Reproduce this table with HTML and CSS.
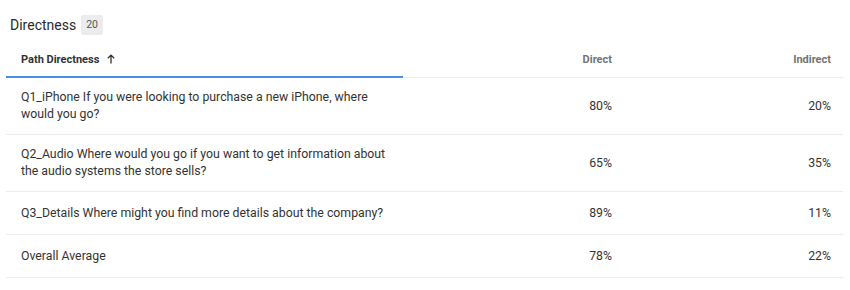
FILE: index.html
```html
<!DOCTYPE html>
<html>
<head>
<meta charset="utf-8">
<link rel="stylesheet" href="styles.css">
</head>
<body>
<div class="widget">
  <div class="title-row">
    <span class="title">Directness</span>
    <span class="badge">20</span>
  </div>
  <table class="grid">
    <colgroup>
      <col class="c1"><col class="c2"><col class="c3">
    </colgroup>
    <thead>
      <tr>
        <th class="sorted">Path Directness
          <svg class="arrow" width="8" height="10" viewBox="0 0 8 10"><path d="M4 9.5V1.2M0.8 4.3L4 1.1L7.2 4.3" fill="none" stroke="#333" stroke-width="1.3"/></svg>
        </th>
        <th class="num">Direct</th>
        <th class="num">Indirect</th>
      </tr>
    </thead>
    <tbody>
      <tr>
        <td>Q1_iPhone If you were looking to purchase a new iPhone, where would you go?</td>
        <td class="num">80%</td>
        <td class="num">20%</td>
      </tr>
      <tr>
        <td>Q2_Audio Where would you go if you want to get information about the audio systems the store sells?</td>
        <td class="num">65%</td>
        <td class="num">35%</td>
      </tr>
      <tr>
        <td>Q3_Details Where might you find more details about the company?</td>
        <td class="num">89%</td>
        <td class="num">11%</td>
      </tr>
      <tr>
        <td>Overall Average</td>
        <td class="num">78%</td>
        <td class="num">22%</td>
      </tr>
    </tbody>
  </table>
</div>
</body>
</html>
```

FILE: styles.css
```css
html, body {
  margin: 0;
  padding: 0;
  background: #fff;
}
body {
  font-family: "Roboto", "Lato", sans-serif;
  color: #333;
}
.widget {
  padding: 0 7px 0 6px;
}
.title-row {
  display: flex;
  align-items: center;
  gap: 5px;
  height: 42px;
  padding: 8px 0 0 4px;
  box-sizing: border-box;
}
.title {
  font-size: 14px;
  color: #2b2b2b;
}
.badge {
  background: #ececec;
  color: #555;
  font-size: 10.5px;
  padding: 3px 5px;
  border-radius: 2px;
  line-height: 14px;
}
.grid {
  width: 837px;
  border-collapse: separate;
  border-spacing: 0;
  table-layout: fixed;
}
.c1 { width: 397px; }
.c2 { width: 221px; }
.c3 { width: 219px; }
th {
  height: 36px;
  box-sizing: border-box;
  padding: 0 12px 0 15px;
  font-size: 11px;
  font-weight: 700;
  color: #737373;
  border-bottom: 1px solid #ececec;
  vertical-align: middle;
  text-align: left;
}
th.sorted {
  color: #333;
  border-bottom: 2px solid #4a90e2;
}
.arrow {
  margin-left: 5px;
  vertical-align: -1px;
}
td {
  height: 43px;
  box-sizing: border-box;
  padding: 11px 12px 11px 15px;
  font-size: 12.3px;
  line-height: 17px;
  border-bottom: 1px solid #ececec;
  vertical-align: middle;
}
td:first-child {
  padding-right: 6px;
}
.num {
  text-align: right;
}
```
